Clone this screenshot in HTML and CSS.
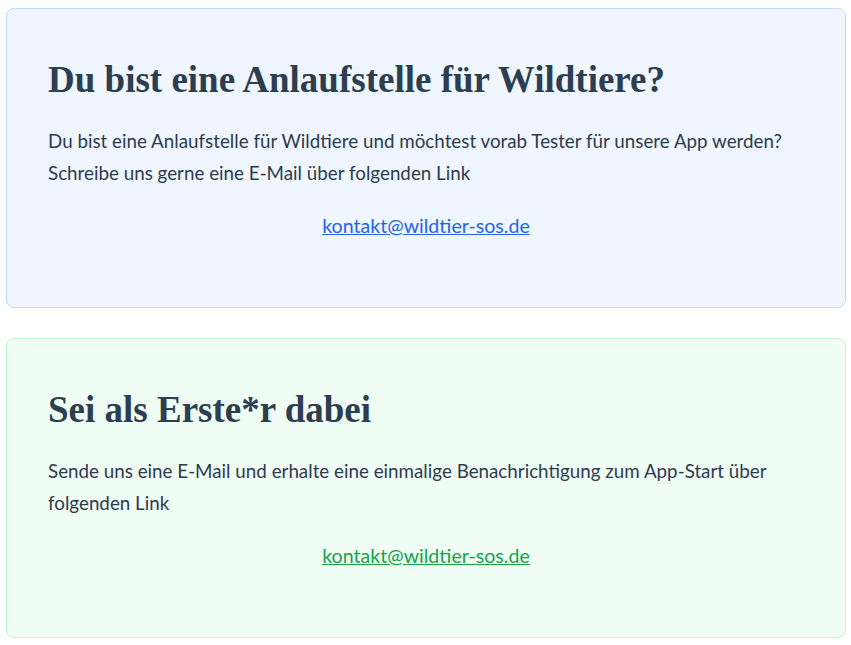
FILE: index.html
```html
<!DOCTYPE html>
<html lang="de">
<head>
    <meta charset="UTF-8">
    <meta name="viewport" content="width=device-width, initial-scale=1.0">
    <title>Wildtier SOS - Kontakt</title>
    <link rel="stylesheet" href="styles.css">
</head>
<body>

<div class="card card-blue">
  <h2>Du bist eine Anlaufstelle für Wildtiere?</h2>
  <p>Du bist eine Anlaufstelle für Wildtiere und möchtest vorab Tester für unsere App werden? Schreibe uns gerne eine E-Mail über folgenden Link</p>
  <div class="link-row"><a href="mailto:kontakt@wildtier-sos.de">kontakt@wildtier-sos.de</a></div>
</div>

<div class="card card-green">
  <h2>Sei als Erste*r dabei</h2>
  <p>Sende uns eine E-Mail und erhalte eine einmalige Benachrichtigung zum App-Start über folgenden Link</p>
  <div class="link-row"><a href="mailto:kontakt@wildtier-sos.de">kontakt@wildtier-sos.de</a></div>
</div>

</body>
</html>
```

FILE: styles.css
```css
body {
  margin: 8px 5px 8px 6px;
  background: #fff;
  font-family: Lato, "Noto Sans", sans-serif;
  color: #2c3e50;
}

.card {
  border: 1px solid;
  border-radius: 8px;
  padding: 47px 41px 65px 41px;
  margin-bottom: 30px;
}

.card-blue {
  background-color: #eff6ff;
  border-color: #bfdbfe;
}

.card-green {
  background-color: #f0fdf4;
  border-color: #bbf7d0;
}

.card h2 {
  margin: 0;
  font-family: "Liberation Serif", serif;
  font-weight: bold;
  font-size: 37px;
  line-height: 48px;
  color: #2c3e50;
}

.card p {
  margin: 21px 0 0 0;
  font-size: 18.8px;
  line-height: 32px;
  color: #2d3b4e;
}

.link-row {
  margin-top: 21px;
  text-align: center;
  font-size: 19.6px;
  line-height: 32px;
}

.card-blue a {
  color: #2563eb;
}

.card-green a {
  color: #16a34a;
}
```
